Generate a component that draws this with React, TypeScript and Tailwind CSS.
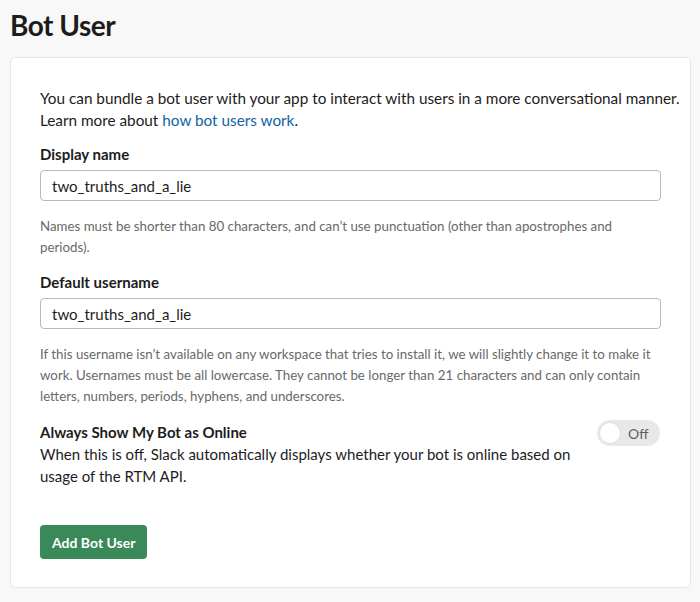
export default function App() {
  return (
    <div className="min-h-[602px] bg-[#f8f8f8] px-[10px] pb-4 font-['Lato','Noto_Sans',sans-serif] text-[#1d1c1d]">
      <h1 className="pt-[8px] pb-[15px] text-[28px] font-bold leading-[34px] tracking-[-0.5px] text-[#1d1c1d]">Bot User</h1>

      <div className="w-[681px] rounded-[5px] border border-[#e6e6e6] bg-white px-[29px] pt-[29px] pb-[28px]">
        <p className="mr-[-22px] text-[15.3px] leading-[22px]">
          You can bundle a bot user with your app to interact with users in a more conversational manner.
          Learn more about <a className="text-[#1264a3]">how bot users work</a>.
        </p>

        <label className="mt-[12px] block text-[15px] font-bold leading-[22px]">Display name</label>
        <input
          readOnly
          value="two_truths_and_a_lie"
          className="mt-[5px] block h-[31px] w-[621px] rounded-[4px] border border-[#b9b9b9] px-[11px] text-[15px] text-[#1d1c1d] outline-none"
        />
        <p className="mt-[15px] w-[614px] text-[13.3px] leading-[21px] text-[#696969]">
          Names must be shorter than 80 characters, and can’t use punctuation (other than apostrophes and periods).
        </p>

        <label className="mt-[13px] block text-[15px] font-bold leading-[22px]">Default username</label>
        <input
          readOnly
          value="two_truths_and_a_lie"
          className="mt-[5px] block h-[31px] w-[621px] rounded-[4px] border border-[#b9b9b9] px-[11px] text-[15px] text-[#1d1c1d] outline-none"
        />
        <p className="mt-[15px] w-[614px] text-[13.3px] leading-[21px] text-[#696969]">
          If this username isn’t available on any workspace that tries to install it, we will slightly change it to make it
          work. Usernames must be all lowercase. They cannot be longer than 21 characters and can only contain letters,
          numbers, periods, hyphens, and underscores.
        </p>

        <div className="mt-[14px] flex items-start justify-between">
          <div className="w-[542px]">
            <div className="text-[15px] font-bold leading-[22px]">Always Show My Bot as Online</div>
            <p className="text-[15px] leading-[22px]">
              When this is off, Slack automatically displays whether your bot is online based on usage of the RTM API.
            </p>
          </div>
          <div className="mt-[-1px] mr-[1px] flex h-[26px] w-[63px] items-center rounded-full bg-[#e8e8e8] p-[2px]">
            <div className="h-[22px] w-[22px] rounded-full border border-[#dedede] bg-white" />
            <span className="ml-[7px] text-[14px] text-[#616061]">Off</span>
          </div>
        </div>

        <button className="mt-[38px] h-[34px] rounded-[4px] bg-[#3a8a59] px-[12px] text-[14px] font-bold text-white">
          Add Bot User
        </button>
      </div>
    </div>
  );
}
